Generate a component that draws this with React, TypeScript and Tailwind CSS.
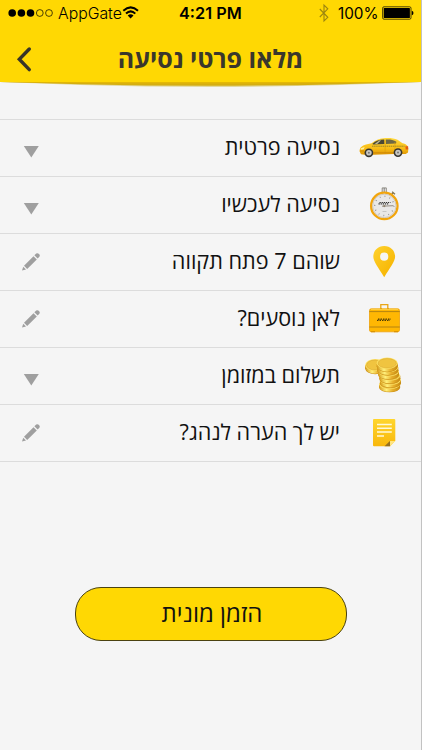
import React from 'react';

type Action = 'select' | 'edit';

interface RideField {
  label: string;
  action: Action;
  icon: React.ReactNode;
}

const CarIcon = () => (
  <svg width="52" height="56" viewBox="0 0 52 56">
    <defs>
      <linearGradient id="car" x1="0" y1="0" x2="0" y2="1">
        <stop offset="0" stopColor="#ffd83a" />
        <stop offset="0.6" stopColor="#f8bd16" />
        <stop offset="1" stopColor="#dd9404" />
      </linearGradient>
    </defs>
    <path
      d="M1.6 31.5C1.4 27.5 4 25.4 8 24.4L13.5 23.3C17.5 20.1 21 18.6 25.5 18.2C31.5 17.8 36 18.2 39.5 19.8L44.5 23.2C48.5 24 50 25.7 50.4 28.5L50 32.5L47.7 34H36L9 35.1L3 34.2Z"
      fill="url(#car)"
    />
    <path d="M14.5 23.7C17.7 20.7 21.5 19.6 26.2 19.5L26.4 23.9L15 24.6Z" fill="#4b4834" />
    <path d="M27.8 19.5C32 19.3 35.5 19.8 38.4 21.8L38 23.6L28 23.9Z" fill="#6e6844" />
    <path d="M16.7 23.9L21.2 20.4L23.2 20.2L19.2 24.1Z" fill="#bcb996" />
    <path d="M14 26.2H46.5" stroke="#8f7d2b" strokeWidth="0.9" strokeDasharray="1.5 0.6" />
    <path d="M27.1 19.6V33.6M36.9 22.1V30" stroke="#d69b08" strokeWidth="0.6" />
    <path d="M2.2 31H6M16 32.8H35" stroke="#c98204" strokeWidth="0.8" />
    <path d="M2.8 28.3L6.6 27L5.8 29.3L2.8 29.8Z" fill="#fff0a0" />
    <path d="M47.4 26.2H50.1V29.5H47.7Z" fill="#e45d12" />
    <circle cx="10.9" cy="32.8" r="4.4" fill="#363532" />
    <circle cx="10.9" cy="32.8" r="2.8" fill="#c8c8c4" />
    <circle cx="10.9" cy="32.8" r="1" fill="#777" />
    <circle cx="40" cy="32.6" r="4.4" fill="#363532" />
    <circle cx="40" cy="32.6" r="2.8" fill="#c8c8c4" />
    <circle cx="40" cy="32.6" r="1" fill="#777" />
  </svg>
);

const StopwatchIcon = () => (
  <svg width="52" height="56" viewBox="0 0 52 56">
    <path d="M24.2 15V10.9H28.3V15" fill="#eee" stroke="#77736a" strokeWidth="0.8" />
    <path d="M26.2 11V15" stroke="#555" strokeWidth="0.7" />
    <path d="M33.5 17.5L35.4 15.5M34.1 14.7L37 17.2" stroke="#817452" strokeWidth="1.3" />
    <circle cx="26.3" cy="28.9" r="13.2" fill="#e9e8e7" stroke="#f2a50c" strokeWidth="2.3" />
    <circle cx="26.3" cy="28.9" r="11.7" fill="none" stroke="#cfc5b5" strokeWidth="0.9" />
    <circle
      cx="26.3"
      cy="28.9"
      r="9.6"
      fill="none"
      stroke="#8c8c8c"
      strokeWidth="1.4"
      strokeDasharray="0.8 4.227"
    />
    <path d="M21.5 25.5H32.5M20.5 26.9H31" stroke="#333" strokeWidth="1.2" strokeDasharray="1.3 0.8" />
    <path d="M24 29.2L35.5 28.7" stroke="#6e6254" strokeWidth="0.7" />
    <circle cx="26.3" cy="29.1" r="1.1" fill="#8d8069" />
    <path d="M24.5 34.5H28.5" stroke="#bcbcbc" strokeWidth="0.8" />
  </svg>
);

const PinIcon = () => (
  <svg width="52" height="56" viewBox="0 0 52 56">
    <defs>
      <linearGradient id="pin" x1="0" y1="0" x2="0.8" y2="1">
        <stop offset="0" stopColor="#ffd22d" />
        <stop offset="1" stopColor="#f6b300" />
      </linearGradient>
    </defs>
    <path
      fillRule="evenodd"
      d="M26.2 12C19.7 12 15.3 16.7 15.3 22.7C15.3 27.5 20.5 33.5 26.2 43.2C31.9 33.5 37.1 27.5 37.1 22.7C37.1 16.7 32.7 12 26.2 12ZM26.2 18.6A4.1 4.1 0 1 1 26.2 26.8A4.1 4.1 0 1 1 26.2 18.6Z"
      fill="url(#pin)"
    />
  </svg>
);

const SuitcaseIcon = () => (
  <svg width="52" height="56" viewBox="0 0 52 56">
    <path d="M22.8 18V13.7H29.8V18" fill="none" stroke="#e9a617" strokeWidth="1.3" />
    <path d="M22 17.7H24M29 17.7H31" stroke="#b68016" strokeWidth="1.2" />
    <rect x="11.5" y="17.8" width="30" height="23" rx="1.7" fill="#ffb703" stroke="#efa20a" strokeWidth="0.8" />
    <path d="M13 18.3H40" stroke="#ffd755" strokeWidth="0.9" />
    <path d="M11.4 20.6H41.8M11.4 36H41.8" stroke="#ad7e13" strokeWidth="0.9" />
    <path d="M13 40.6H17M36 40.6H40" stroke="#d99405" strokeWidth="1.1" />
    <path d="M20 28.2H33M19 29.4H32" stroke="#4e3c08" strokeWidth="1.2" strokeDasharray="1.5 1" />
  </svg>
);

// y offsets of the stacked coins, bottom first
const stack = [
  { x: 31.6, y: 36.3 },
  { x: 32.4, y: 32 },
  { x: 31.8, y: 27.8 },
  { x: 30.5, y: 23.6 },
  { x: 29.8, y: 19.5 },
  { x: 29.2, y: 15.3 },
];

const Coin = ({ x, y, rx, ry }: { x: number; y: number; rx: number; ry: number }) => (
  <g>
    <ellipse cx={x} cy={y + 3.2} rx={rx} ry={ry} fill="#c98c13" />
    <rect x={x - rx} y={y} width={rx * 2} height="2.7" fill="url(#coin-side)" />
    <ellipse cx={x} cy={y + 2.7} rx={rx} ry={ry} fill="url(#coin-side)" />
    <ellipse cx={x} cy={y} rx={rx} ry={ry} fill="#ffe467" />
    <ellipse cx={x} cy={y} rx={rx - 1.3} ry={ry - 1} fill="#f0c440" stroke="#d3a02d" strokeWidth="0.5" />
  </g>
);

const CoinsIcon = () => (
  <svg width="52" height="56" viewBox="0 0 52 56">
    <defs>
      <linearGradient id="coin-side">
        <stop offset="0" stopColor="#d59a1b" />
        <stop offset="0.35" stopColor="#fff07c" />
        <stop offset="0.65" stopColor="#e8b02b" />
        <stop offset="1" stopColor="#c58912" />
      </linearGradient>
    </defs>
    <Coin x={17.2} y={17} rx={10} ry={6} />
    {stack.map((coin, idx) => (
      <Coin key={idx} x={coin.x} y={coin.y} rx={10.5} ry={idx === 5 ? 5.7 : 4.8} />
    ))}
  </svg>
);

const NoteIcon = () => (
  <svg width="52" height="56" viewBox="0 0 52 56">
    <defs>
      <linearGradient id="note" x1="0" y1="0" x2="0" y2="1">
        <stop offset="0" stopColor="#ffd62d" />
        <stop offset="1" stopColor="#f8b70c" />
      </linearGradient>
    </defs>
    <path d="M16 14H36.2Q37.3 14 37.3 15V35.8L32 41.2H16Q15 41.2 15 40.2V15Q15 14 16 14Z" fill="url(#note)" />
    <path d="M26.5 41.2L32.2 35.8V41.2Z" fill="#957021" />
    <path d="M32 36H37.3L32 41.2Z" fill="#ffe582" />
    <path d="M19 19.6H33.8M19 23.3H33.8M19 27H33.8M19 31H26" stroke="#fff9d8" strokeWidth="1.5" />
  </svg>
);

const fields: RideField[] = [
  { label: 'נסיעה פרטית', action: 'select', icon: <CarIcon /> },
  { label: 'נסיעה לעכשיו', action: 'select', icon: <StopwatchIcon /> },
  { label: 'שוהם 7 פתח תקווה', action: 'edit', icon: <PinIcon /> },
  { label: 'לאן נוסעים?', action: 'edit', icon: <SuitcaseIcon /> },
  { label: 'תשלום במזומן', action: 'select', icon: <CoinsIcon /> },
  { label: 'יש לך הערה לנהג?', action: 'edit', icon: <NoteIcon /> },
];

const ActionIcon = ({ action }: { action: Action }) =>
  action === 'select' ? (
    <svg width="24" height="56" viewBox="0 0 24 56">
      <path d="M4.8 26H19.8L12.3 37.5Z" fill="#9f9f9f" />
    </svg>
  ) : (
    <svg width="24" height="56" viewBox="0 0 24 56" fill="#9f9f9f">
      <path d="M3 36.5L4.2 32.7L7 35.4Z" />
      <path d="M5 31.7L14.5 22.2L17.8 25.4L8.2 34.9Z" />
      <path d="M15.4 21.3L17.2 19.6Q18.6 18.6 20 20T20.4 22.7L18.6 24.5Z" />
    </svg>
  );

const StatusBar = () => (
  <div className="flex h-[26px] items-center font-['Inter','Liberation_Sans',sans-serif] whitespace-nowrap text-black">
    <svg width="58" height="26" viewBox="0 0 58 26">
      <circle cx="12.2" cy="13" r="3.8" />
      <circle cx="21.4" cy="13" r="3.8" />
      <circle cx="30.5" cy="13" r="3.8" />
      <circle cx="39.8" cy="13" r="3.4" fill="none" stroke="#000" strokeWidth="0.7" />
      <circle cx="49" cy="13" r="3.4" fill="none" stroke="#000" strokeWidth="0.7" />
    </svg>
    <span className="w-[64px] pt-[2px] text-[15.8px] leading-[26px] font-light">AppGate</span>
    <svg width="18" height="26" viewBox="0 0 18 26" fill="none" stroke="#000" strokeWidth="2">
      <path d="M1.3 10.7Q8.7 4 16 10.7" />
      <path d="M4 13.6Q8.7 9.2 13.3 13.6" />
      <path d="M5.7 15.5Q8.7 13 11.5 15.5L8.6 18.5Z" fill="#000" stroke="none" />
    </svg>
    <span className="ml-[39px] w-[99px] text-[16.3px] leading-[26px] font-semibold">4:21 PM</span>
    <svg width="12" height="26" viewBox="0 0 12 26" className="ml-[40px]" fill="none" stroke="#9b8510" strokeWidth="1.1">
      <path d="M1.8 9L9.8 17.3L6 21V5L9.8 8.8L1.8 17" />
    </svg>
    <span className="ml-[8px] w-[42px] pt-[2px] text-[15.3px] leading-[26px]">100%</span>
    <svg width="34" height="26" viewBox="0 0 34 26">
      <rect x="2.6" y="6.8" width="28.4" height="12.4" rx="1.4" fill="none" stroke="#000" strokeWidth="0.7" />
      <rect x="3.7" y="7.9" width="26.2" height="10.2" rx="0.6" />
      <path d="M31.8 10.8Q33.5 11 33.5 13T31.8 15.2Z" />
    </svg>
  </div>
);

const Header = () => (
  <header className="relative h-[82px] bg-[#ffd803]">
    <StatusBar />
    <div className="flex h-[56px] items-start">
      <button aria-label="חזרה">
        <svg width="40" height="56" viewBox="0 0 40 56" fill="none">
          <path d="M29.3 23L19.3 33.3L29.3 43.6" stroke="#383528" strokeWidth="3.4" strokeLinecap="round" />
        </svg>
      </button>
      <h1 dir="rtl" className="mt-[11px] w-[341px] text-center text-[25px] leading-[42px] font-bold text-[#3a372c]">
        מלאו פרטי נסיעה
      </h1>
    </div>
    <svg className="absolute top-[82px] left-0" width="422" height="8" viewBox="0 0 422 8">
      <path d="M0 0L80 3Q211 7 340 3L422 0Z" fill="#e1d8a0" />
      <path d="M0 0L80 2.2Q211 5.4 340 2.2L422 0Z" fill="#d5ae10" />
      <path d="M0 0Q211 3 422 0Z" fill="#e4b805" />
    </svg>
  </header>
);

const FieldRow = ({ field }: { field: RideField }) => (
  <div className="flex h-[57px] items-start border-b border-[#dcdcdc] pr-[11px] pl-[19px]">
    <ActionIcon action={field.action} />
    <span dir="rtl" className="mt-[6px] flex-1 text-[21.6px] leading-[42px] whitespace-nowrap text-[#111]">
      {field.label}
    </span>
    <div className="ml-[18px] w-[52px] flex-shrink-0">{field.icon}</div>
  </div>
);

const App: React.FC = () => {
  return (
    <div className="flex h-[750px] w-[422px] flex-col overflow-hidden border-r border-[#c2c2c2] bg-[#f5f5f5] font-['Open_Sans','Noto_Sans',sans-serif]">
      <Header />
      <main className="mt-[37px] border-t border-[#dcdcdc]">
        {fields.map((field) => (
          <FieldRow key={field.label} field={field} />
        ))}
      </main>
      <button
        dir="rtl"
        className="mt-[125px] ml-[75px] h-[54px] w-[272px] rounded-[26px] border border-[#4a4210] bg-[#ffd803] pb-[2px] pl-[2px] text-[24px] leading-[50px] text-[#111]"
      >
        הזמן מונית
      </button>
    </div>
  );
};

export default App;
